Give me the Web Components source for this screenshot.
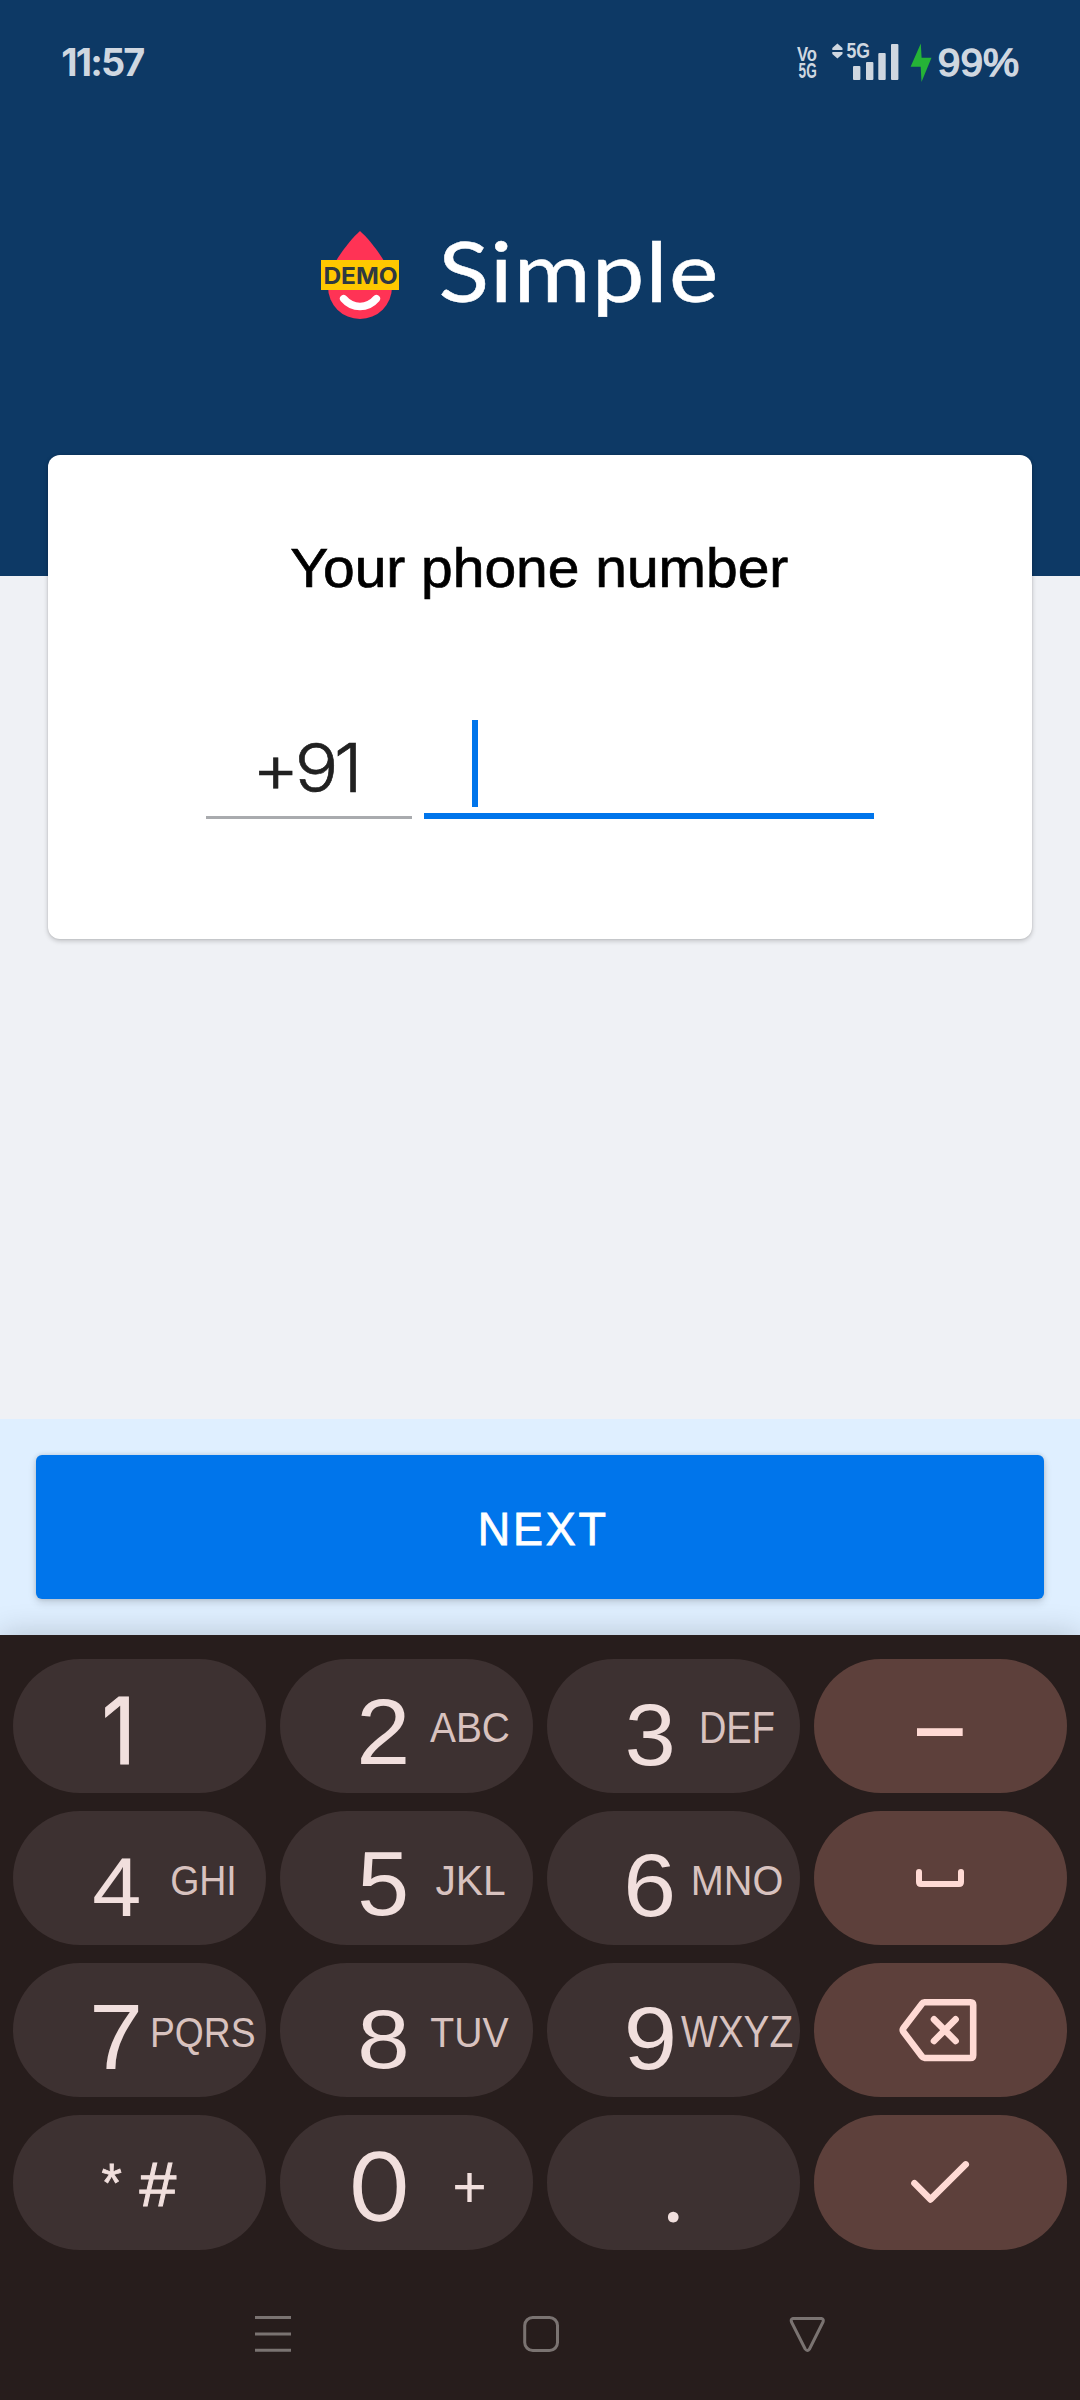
<!DOCTYPE html>
<html lang="en">
<head>
<meta charset="utf-8">
<title>Simple</title>
<style>
  html, body { margin: 0; padding: 0; }
  body { width: 1080px; height: 2400px; overflow: hidden; background: #eff1f5; font-family: "Liberation Sans", sans-serif; }
</style>
</head>
<body>
<phone-screen></phone-screen>
<script>
const pen = document.createElement('canvas').getContext('2d');

/* Text whose box is exactly its visible ink: w and h give the size, l and t the space before it. */
class InkText extends HTMLElement {
  connectedCallback() {
    const num = (name, fallback) => this.hasAttribute(name) ? parseFloat(this.getAttribute(name)) : fallback;
    const text = this.textContent.trim();
    const w = num('w', 10), h = num('h', 10), weight = num('weight', 400), stroke = num('stroke', 0);
    const family = this.getAttribute('face') || 'Liberation Sans';
    pen.font = `${weight} 200px "${family}"`;
    const m = pen.measureText(text);
    const size = 200 * (h - stroke) / (m.actualBoundingBoxAscent + m.actualBoundingBoxDescent);
    const k = size / 200;
    const inkW = (m.actualBoundingBoxLeft + m.actualBoundingBoxRight) * k;
    const single = text.length < 2 || this.hasAttribute('stretch');
    const sx = single ? (w - stroke) / inkW : num('sx', 1);
    const spacing = single ? 0 : ((w - stroke) / sx - inkW) / (text.length - 1);
    const asc = m.fontBoundingBoxAscent * k, desc = m.fontBoundingBoxDescent * k;
    const baseline = h / 2 + (asc - desc) / 2;
    const dy = m.actualBoundingBoxAscent * k + stroke / 2 - baseline;
    const dx = m.actualBoundingBoxLeft * k * sx + stroke / 2;
    this.attachShadow({ mode: 'open' }).innerHTML = `
      <style>
        :host { display: block; flex: none; width: ${w}px; height: ${h}px; margin-left: ${num('l', 0)}px; margin-top: ${num('t', 0)}px; }
        span { display: block; width: max-content; white-space: nowrap; transform-origin: 0 0;
          font: ${weight} ${size}px/${h}px "${family}", sans-serif; letter-spacing: ${spacing}px;
          -webkit-text-stroke: ${stroke}px currentColor;
          transform: translate(${dx}px, ${dy}px) scaleX(${sx}); }
      </style><span><slot></slot></span>`;
  }
}

class StatusBar extends HTMLElement {
  connectedCallback() {
    this.attachShadow({ mode: 'open' }).innerHTML = `
      <style>
        :host { display: flex; align-items: flex-start; height: 120px; color: #cfd7e0; }
        svg { display: block; flex: none; }
        .vo { margin: 46.7px 0 0 653.3px; width: 19px; }
        .arrows { margin: 43px 0 0 15.5px; }
        .net { display: flex; flex-direction: column; width: 52px; margin: 43px 0 0 4.2px; }
        .bolt { margin: 43px 0 0 11px; }
      </style>
      <ink-text w="81" h="28" l="63" t="48" weight="700" face="Inter">11:57</ink-text>
      <div class="vo">
        <ink-text w="19.4" h="14.6" weight="700" stretch>Vo</ink-text>
        <ink-text w="17" h="16" l="2" t="1.5" weight="700" stretch>5G</ink-text>
      </div>
      <svg class="arrows" width="11" height="16" fill="currentColor"><path d="M5.4 .5 10.5 5v2H.3V5zM.3 9h10.2v2L5.4 15.5.3 11z"/></svg>
      <div class="net">
        <svg width="52" height="38" viewBox="847 43 52 38" fill="currentColor">
          <rect x="853" y="66" width="7.4" height="14" rx="1"/><rect x="866" y="62" width="7.4" height="18" rx="1"/>
          <rect x="878.3" y="53" width="7.4" height="27" rx="1"/><rect x="891" y="44" width="7.4" height="36" rx="1"/>
        </svg>
        <ink-text w="22" h="16" t="-38" weight="700" stretch>5G</ink-text>
      </div>
      <svg class="bolt" width="22" height="40" viewBox="910 43 22 40" fill="#25b337"><path d="M920.8 43.5 921.6 57.7H931.5L921.5 82 920.7 66.7H910.6z"/></svg>
      <ink-text w="79.4" h="28.5" l="7.5" t="48.6" stroke="1.4" stretch>99%</ink-text>`;
  }
}

class BrandLogo extends HTMLElement {
  connectedCallback() {
    this.attachShadow({ mode: 'open' }).innerHTML = `
      <style>
        :host { display: flex; align-items: flex-start; color: #fff; }
        .mark { display: flex; flex-direction: column; width: 78px; height: 88px; margin: 111px 0 0 321px; }
        svg { display: block; flex: none; }
        .tag { display: flex; width: 78px; height: 30px; margin-top: -59px; background: #ffc800; color: #2f3941; }
      </style>
      <div class="mark">
        <svg width="78" height="88" viewBox="321 231 78 88"><path fill="#ff3355" d="M360 231C368 238 378 251 384 261C390 271 392 279 392 287A32 32 0 0 1 328 287C328 279 330 271 336 261C342 251 352 238 360 231Z"/><path d="M343.700 298.700C352.500 309 367.500 309 376.300 298.700" fill="none" stroke="#fff" stroke-width="7.600" stroke-linecap="round"/></svg>
        <div class="tag"><ink-text w="71.500" h="17.400" l="3.600" t="6.800" weight="700" face="Inter" sx="1.05">DEMO</ink-text></div>
      </div>
      <ink-text w="274" h="75.700" l="42.300" t="121" weight="400" face="Lato" stroke=".5" sx="1.13">Simple</ink-text>`;
  }
}

class PhoneCard extends HTMLElement {
  connectedCallback() {
    this.attachShadow({ mode: 'open' }).innerHTML = `
      <style>
        :host { display: flex; flex-direction: column; box-sizing: border-box; width: 984px; height: 484px; margin: -121px auto 0;
          border-radius: 12px; background: #fff; box-shadow: 0 2px 5px rgba(0,0,0,.2), 0 0 2px rgba(0,0,0,.14); color: #000; }
        .row { display: flex; gap: 12px; margin: 120.5px 0 0 158px; }
        .code { box-sizing: border-box; display: flex; width: 206px; height: 99px; border-bottom: 3px solid #a9abae; color: #212121; }
        .number { box-sizing: border-box; display: flex; width: 450px; height: 99px; border-bottom: 6px solid #0075eb; }
        .caret { width: 6px; height: 87px; margin-left: 48px; background: #0075eb; }
      </style>
      <ink-text w="497" h="52.500" l="242.500" t="92" stroke=".7" stretch>Your phone number</ink-text>
      <div class="row">
        <div class="code"><ink-text w="97" h="51" l="53" t="22" weight="300" face="Inter" stroke=".6" sx="1.08">+91</ink-text></div>
        <div class="number"><div class="caret"></div></div>
      </div>`;
  }
}

class NextBar extends HTMLElement {
  connectedCallback() {
    this.attachShadow({ mode: 'open' }).innerHTML = `
      <style>
        :host { display: flex; box-sizing: border-box; height: 216px; padding: 36px; background: #dfefff; }
        .button { display: flex; flex: 1; border-radius: 6px; background: #0075eb; color: #fff;
          box-shadow: 0 4px 8px rgba(0,0,0,.13), 0 0 5px rgba(0,0,0,.14); }
      </style>
      <div class="button"><ink-text w="124.500" h="33" l="444.500" t="58.300" stroke=".8" sx=".97">NEXT</ink-text></div>`;
  }
}

class KeyCap extends HTMLElement {
  connectedCallback() {
    this.attachShadow({ mode: 'open' }).innerHTML = `
      <style>
        :host { display: flex; align-items: flex-start; box-sizing: border-box; border-radius: 67px; background: #3d3131; color: #f1dfdd; }
        :host([accent]) { background: #5d403b; color: #ffdad4; }
        ::slotted(.sub) { color: #d8c2bf; }
        ::slotted(svg) { display: block; flex: none; }
      </style><slot></slot>`;
  }
}

class NumberPad extends HTMLElement {
  connectedCallback() {
    const letters = (w, l, t, text, h = 30) => `<ink-text class="sub" w="${w}" h="${h}" l="${l}" t="${t}" stretch>${text}</ink-text>`;
    this.attachShadow({ mode: 'open' }).innerHTML = `
      <style>
        :host { display: block; box-sizing: border-box; height: 765px; padding: 24px 13px 0; background: #271d1c; box-shadow: 0 0 30px rgba(0,0,0,.2); }
        .grid { display: grid; grid-template-columns: repeat(4, 253px); grid-template-rows: repeat(3, 134px) 135px; gap: 18px 14px; }
        .nav { display: flex; align-items: flex-start; margin-top: 65px; }
        svg { display: block; flex: none; fill: none; stroke-linecap: round; stroke-linejoin: round; }
        .nav svg { stroke: #7a7371; stroke-width: 3; }
      </style>
      <div class="grid">
        <key-cap><ink-text w="24" h="68" l="92" t="38" face="Inter" stroke="1">1</ink-text></key-cap>
        <key-cap><ink-text w="44.700" h="65" l="80.5" t="41">2</ink-text>${letters(78.500, 25.2, 54, 'ABC')}</key-cap>
        <key-cap><ink-text w="44" h="62" l="81.200" t="45">3</ink-text>${letters(71.500, 29.400, 54, 'DEF')}</key-cap>
        <key-cap accent><ink-text w="46" h="8" l="103" t="70">–</ink-text></key-cap>

        <key-cap><ink-text w="45" h="58.300" l="80.900" t="47.300">4</ink-text>${letters(61.500, 32.9, 54, 'GHI', 30.300)}</key-cap>
        <key-cap><ink-text w="44.300" h="63" l="80.7" t="43.300">5</ink-text>${letters(68.500, 31, 54, 'JKL', 30.300)}</key-cap>
        <key-cap><ink-text w="44.2" h="62.700" l="81.400" t="43.600">6</ink-text>${letters(87.500, 21, 54, 'MNO', 30.300)}</key-cap>
        <key-cap accent><svg width="48" height="18" style="margin:58px 0 0 102px" stroke="#ffdad4" stroke-width="6"><path d="M3 3V13Q3 15 5 15H43Q45 15 45 13V3"/></svg></key-cap>

        <key-cap><ink-text w="44.4" h="64" l="80.900" t="42">7</ink-text>${letters(101, 14.400, 54.500, 'PQRS', 37.600)}</key-cap>
        <key-cap><ink-text w="44.800" h="60" l="80.500" t="46">8</ink-text>${letters(77.500, 25.500, 54, 'TUV')}</key-cap>
        <key-cap><ink-text w="44.6" h="63.300" l="81.400" t="43.700">9</ink-text>${letters(111, 7.700, 54, 'WXYZ')}</key-cap>
        <key-cap accent><svg width="79" height="64" viewBox="898 1998 79 64" style="margin:35px 0 0 84px" stroke="#ffdad4" stroke-width="6.600"><path d="M924.500 2002.200H970.500Q973.200 2002.200 973.200 2005V2055.300Q973.200 2058 970.500 2058H924.500Q923 2058 922 2056.500L903.500 2032Q902 2030 903.500 2028L922 2003.700Q923 2002.200 924.500 2002.200ZM934 2019.300 955.600 2041M955.600 2019.300 934 2041"/></svg></key-cap>

        <key-cap><ink-text w="19.600" h="20" l="88.600" t="48" stroke=".8">*</ink-text><ink-text w="37.700" h="44" l="17.800" t="48" stroke="1">#</ink-text></key-cap>
        <key-cap><ink-text w="52.300" h="70" l="73" t="37" weight="300" face="Inter" stroke="1.400">0</ink-text><ink-text w="29" h="29" l="49.600" t="58">+</ink-text></key-cap>
        <key-cap><ink-text w="11" h="11.200" l="121" t="96" face="Lato">.</ink-text></key-cap>
        <key-cap accent><svg width="60" height="44" viewBox="910 2160 60 44" style="margin:45px 0 0 96px" stroke="#ffdad4" stroke-width="6.600"><path d="M914.500 2183.200 930.500 2199.400 965.700 2164.400"/></svg></key-cap>
      </div>
      <div class="nav">
        <svg width="36" height="38" style="margin-left:242px"><path stroke-linecap="butt" d="M0 2.500H36M0 19H36M0 35.300H36"/></svg>
        <svg width="36" height="38" style="margin-left:232px"><rect x="1.700" y="2.500" width="32.800" height="33" rx="8"/></svg>
        <svg width="36" height="38" style="margin-left:230px"><path d="M4 3.500H32.500Q35 4 34 7L20.500 34Q18.300 37 16.200 34L2.500 7Q1.500 4 4 3.500Z"/></svg>
      </div>`;
  }
}

class PhoneScreen extends HTMLElement {
  connectedCallback() {
    this.attachShadow({ mode: 'open' }).innerHTML = `
      <style>
        :host { display: flex; flex-direction: column; width: 1080px; height: 2400px; background: #eff1f5; }
        header { height: 576px; background: #0d3965; }
        phone-card { flex: none; }
        .space { flex: 1; }
        number-pad, next-bar, header { flex: none; }
      </style>
      <header><status-bar></status-bar><brand-logo></brand-logo></header>
      <phone-card></phone-card>
      <div class="space"></div>
      <next-bar></next-bar>
      <number-pad></number-pad>`;
  }
}

customElements.define('ink-text', InkText);
customElements.define('status-bar', StatusBar);
customElements.define('brand-logo', BrandLogo);
customElements.define('phone-card', PhoneCard);
customElements.define('next-bar', NextBar);
customElements.define('key-cap', KeyCap);
customElements.define('number-pad', NumberPad);
customElements.define('phone-screen', PhoneScreen);
</script>
</body>
</html>
